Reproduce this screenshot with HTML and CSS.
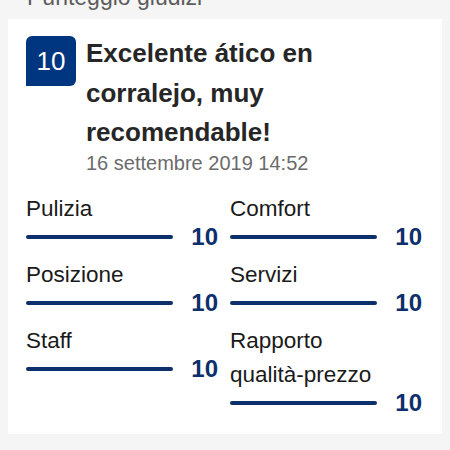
FILE: index.html
```html
<!DOCTYPE html>
<html lang="it">
<head>
    <meta charset="UTF-8">
    <title>Punteggio giudizi</title>
    <link rel="stylesheet" href="styles.css">
</head>
<body>
    <div class="section-title">Punteggio giudizi</div>

    <div class="card">
        <div class="review-head">
            <div class="badge">10</div>
            <div class="review-text">
                <h2 class="review-title">Excelente ático en corralejo, muy recomendable!</h2>
                <div class="review-date">16 settembre 2019 14:52</div>
            </div>
        </div>

        <div class="scores">
            <div class="score-item">
                <div class="score-label">Pulizia</div>
                <div class="score-row"><div class="score-bar"></div><span class="score-value">10</span></div>
            </div>
            <div class="score-item">
                <div class="score-label">Comfort</div>
                <div class="score-row"><div class="score-bar"></div><span class="score-value">10</span></div>
            </div>
            <div class="score-item">
                <div class="score-label">Posizione</div>
                <div class="score-row"><div class="score-bar"></div><span class="score-value">10</span></div>
            </div>
            <div class="score-item">
                <div class="score-label">Servizi</div>
                <div class="score-row"><div class="score-bar"></div><span class="score-value">10</span></div>
            </div>
            <div class="score-item">
                <div class="score-label">Staff</div>
                <div class="score-row"><div class="score-bar"></div><span class="score-value">10</span></div>
            </div>
            <div class="score-item">
                <div class="score-label">Rapporto <span class="nowrap">qualità-prezzo</span></div>
                <div class="score-row"><div class="score-bar"></div><span class="score-value">10</span></div>
            </div>
        </div>
    </div>
</body>
</html>
```

FILE: styles.css
```css
body {
    margin: 0;
    font-family: 'Liberation Sans', Arial, sans-serif;
    background: #f5f5f5;
    color: #222;
    overflow: hidden;
}
.section-title {
    margin-top: -16px;
    padding-left: 27px;
    font-size: 23px;
    line-height: 27px;
    color: #5c5c5c;
}
.card {
    margin: 8px 8px 0 8px;
    background: #fff;
    padding: 15px 20px 20px 18px;
}
.review-head {
    display: flex;
    align-items: flex-start;
    gap: 10px;
}
.badge {
    flex: none;
    width: 50px;
    height: 50px;
    margin-top: 2px;
    background: #003580;
    color: #fff;
    border-radius: 6px 6px 6px 0;
    font-size: 26px;
    line-height: 50px;
    text-align: center;
}
.review-title {
    margin: 0;
    font-size: 26px;
    line-height: 39.5px;
    font-weight: bold;
    color: #262626;
    padding-right: 60px;
}
.review-date {
    font-size: 20px;
    line-height: 20px;
    color: #6b6b6b;
}
.scores {
    margin-top: 19px;
    display: grid;
    grid-template-columns: 192px 192px;
    column-gap: 12px;
    row-gap: 10px;
    align-items: start;
}
.score-label {
    font-size: 22.5px;
    line-height: 34px;
    color: #1a1a1a;
}
.nowrap {
    white-space: nowrap;
}
.score-row {
    display: flex;
    align-items: center;
    height: 22px;
}
.score-bar {
    width: 147px;
    height: 4px;
    border-radius: 2px;
    background: #0d2f6b;
}
.score-value {
    margin-left: auto;
    font-size: 24px;
    line-height: 22px;
    font-weight: bold;
    color: #0d2f6b;
}
```
